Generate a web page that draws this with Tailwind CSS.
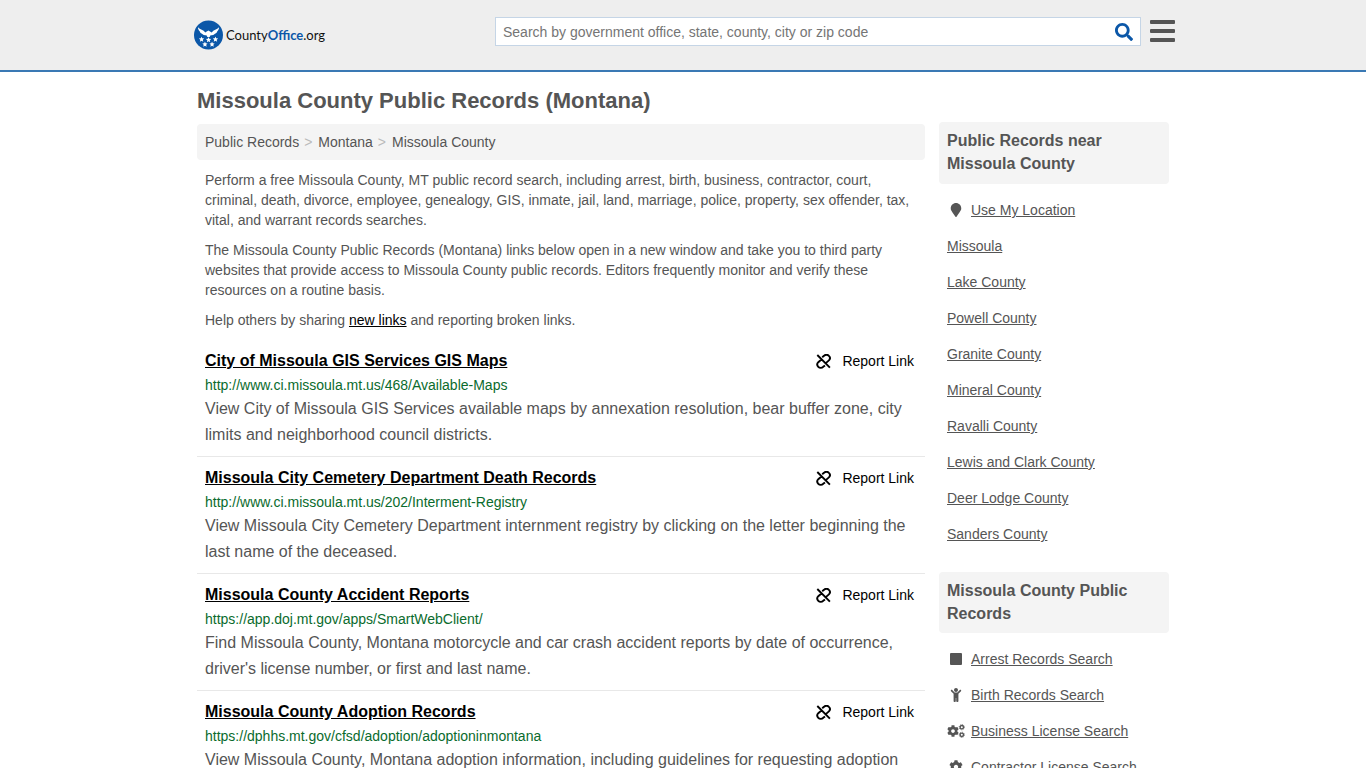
<!DOCTYPE html>
<html lang="en">
<head>
<meta charset="utf-8">
<meta name="viewport" content="width=device-width, initial-scale=1">
<title>Missoula County Public Records (Montana)</title>
<script src="https://cdn.jsdelivr.net/npm/@tailwindcss/browser@4"></script>
</head>
<body class="bg-white font-['Liberation_Sans',Arial,sans-serif] text-sm text-[#555]">
<svg class="hidden" aria-hidden="true">
  <symbol id="unlink" viewBox="0 0 15 15"><g fill="none" stroke="currentColor" stroke-width="1.900"><path d="M1.300 1 13.900 13.600M6.200 3.200 8 1.800a3.300 3.300 0 0 1 4.900 0 3.300 3.300 0 0 1 0 4.600L9.800 9.100M9 11.400 7.200 12.800a3.300 3.300 0 0 1-4.900 0 3.300 3.300 0 0 1 0-4.600L5.400 5.500"/></g></symbol>
  <symbol id="cog" viewBox="0 0 512 512"><path fill="currentColor" d="M487.400 315.700l-42.600-24.600c4.300-23.200 4.300-47 0-70.200l42.600-24.600c4.900-2.800 7.100-8.600 5.500-14-11.100-35.600-30-67.800-54.700-94.600-3.800-4.100-10-5.100-14.800-2.300L380.800 110c-17.900-15.400-38.500-27.300-60.800-35.100V25.800c0-5.600-3.900-10.500-9.400-11.700-36.700-8.200-74.300-7.800-109.200 0-5.500 1.200-9.400 6.100-9.400 11.700V75c-22.200 7.900-42.800 19.800-60.800 35.100L88.700 85.500c-4.900-2.800-11-1.900-14.800 2.300-24.700 26.700-43.600 58.900-54.700 94.600-1.700 5.400.6 11.200 5.500 14L67.300 221c-4.300 23.200-4.300 47 0 70.200l-42.600 24.600c-4.900 2.800-7.100 8.600-5.500 14 11.100 35.600 30 67.800 54.700 94.600 3.800 4.100 10 5.100 14.800 2.300l42.600-24.600c17.900 15.400 38.500 27.300 60.800 35.100v49.200c0 5.600 3.900 10.500 9.400 11.700 36.700 8.200 74.300 7.800 109.200 0 5.500-1.200 9.400-6.100 9.400-11.700v-49.200c22.200-7.900 42.800-19.800 60.800-35.100l42.600 24.600c4.900 2.800 11 1.900 14.800-2.300 24.700-26.700 43.600-58.900 54.700-94.600 1.500-5.500-.7-11.300-5.600-14.100zM256 336c-44.100 0-80-35.900-80-80s35.900-80 80-80 80 35.900 80 80-35.900 80-80 80z"/></symbol>
  <symbol id="star" viewBox="0 0 10 10"><path fill="#fff" d="M5 0 6.300 3.400 10 3.700 7.200 6 8.100 9.700 5 7.700 1.900 9.700 2.800 6 0 3.700 3.700 3.400z"/></symbol>
</svg>

<header class="border-b-2 border-[#3a79b4] bg-[#eee]">
  <div class="mx-auto flex max-w-[980px] items-start justify-between pt-4 pb-5">
    <a href="#" aria-label="CountyOffice.org" class="flex items-center gap-[3px] pt-1 text-[13px] leading-5">
      <svg class="size-[30px]" viewBox="0 0 30 30" aria-hidden="true">
        <circle cx="15.500" cy="15" r="14.500" fill="#0b57a8"/>
        <path fill="#fff" d="M5 7.200C7 9.500 10.500 9.800 12.300 12.400L13.700 11.400 15.500 10.600 17 11.600 18.700 12.400C20.500 9.800 24 9.500 26 7.200 26 9 25.400 10.300 24.300 11.200 24 12.600 22.800 13.600 21.600 13.900 20.600 15 19 15.400 17.600 15.300L16.600 17h-2.200l-1-1.700C12 15.400 10.400 15 9.400 13.900 8.200 13.600 7 12.600 6.700 11.200 5.600 10.300 5 9 5 7.200z"/>
        <use href="#star" x="5.800" y="16.500" width="5.500" height="5.500"/><use href="#star" x="12.800" y="17" width="5.500" height="5.500"/><use href="#star" x="19.700" y="16.500" width="5.500" height="5.500"/>
        <use href="#star" x="9.200" y="21.500" width="5.500" height="5.500"/><use href="#star" x="16.300" y="21.500" width="5.500" height="5.500"/>
      </svg>
      <span class="font-[Lato,sans-serif] text-[#111]">County<b class="text-[#0b57a8]">Office</b>.org</span>
    </a>
    <div class="flex items-start gap-[9px]">
      <form class="mt-px flex h-[29px] w-[646px] items-center border border-[#c5d5e6] bg-white">
        <input type="search" aria-label="Search" placeholder="Search by government office, state, county, city or zip code" class="min-w-0 flex-1 px-[7px] text-sm outline-none placeholder:text-[#757575]">
        <button type="button" aria-label="Submit search" class="mr-[7px] text-[#0b57a8]"><svg class="size-[18px]" viewBox="0 0 512 512"><path fill="currentColor" d="M505 442.700L405.300 343c-4.500-4.500-10.600-7-17-7H372c27.600-35.300 44-79.700 44-128C416 93.100 322.900 0 208 0S0 93.100 0 208s93.100 208 208 208c48.300 0 92.700-16.400 128-44v16.300c0 6.400 2.500 12.500 7 17l99.700 99.700c9.400 9.400 24.600 9.400 33.900 0l28.300-28.300c9.400-9.400 9.400-24.600.1-34zM208 336c-70.700 0-128-57.200-128-128 0-70.700 57.200-128 128-128 70.700 0 128 57.200 128 128 0 70.700-57.200 128-128 128z"/></svg></button>
      </form>
      <button type="button" aria-label="Menu" class="-mr-[2px] mt-1 flex w-[25px] flex-col gap-[5px]"><span class="h-1 w-full rounded-[1px] bg-[#555]"></span><span class="h-1 w-full rounded-[1px] bg-[#555]"></span><span class="h-1 w-full rounded-[1px] bg-[#555]"></span></button>
    </div>
  </div>
</header>

<div class="mx-auto flex max-w-[972px] items-start gap-[14px]">
  <main class="min-w-0 flex-1">
    <h1 class="mt-[14px] text-[22px] leading-[30px] font-bold">Missoula County Public Records (Montana)</h1>
    <nav aria-label="Breadcrumb" class="mt-2 flex h-9 items-center gap-[5px] rounded bg-[#f4f4f4] px-2"><a href="#">Public Records</a><span class="mr-px text-[#bbb]">&gt;</span><a href="#">Montana</a><span class="mr-px text-[#bbb]">&gt;</span><a href="#">Missoula County</a></nav>
    <div class="mt-[10px] flex flex-col gap-[10px] px-2 leading-5">
      <p>Perform a free Missoula County, MT public record search, including arrest, birth, business, contractor, court, criminal, death, divorce, employee, genealogy, GIS, inmate, jail, land, marriage, police, property, sex offender, tax, vital, and warrant records searches.</p>
      <p>The Missoula County Public Records (Montana) links below open in a new window and take you to third party websites that provide access to Missoula County public records. Editors frequently monitor and verify these resources on a routine basis.</p>
      <p>Help others by sharing <a href="#" class="text-black underline">new links</a> and reporting broken links.</p>
    </div>
    <ul class="mt-[10px]">
      <li class="border-b border-[#e8e8e8] px-2 py-2">
        <div class="flex items-center justify-between leading-[26px] text-black"><a href="#" class="text-base leading-[26px] font-bold underline">City of Missoula GIS Services GIS Maps</a><button type="button" class="mr-[3px] flex items-center gap-[11px]"><svg class="size-[15px]"><use href="#unlink"/></svg>Report Link</button></div>
        <a href="#" class="block leading-[22px] text-[#0a6b2d]">http://www.ci.missoula.mt.us/468/Available-Maps</a>
        <p class="text-base leading-[26px]">View City of Missoula GIS Services available maps by annexation resolution, bear buffer zone, city limits and neighborhood council districts.</p>
      </li>
      <li class="border-b border-[#e8e8e8] px-2 py-2">
        <div class="flex items-center justify-between leading-[26px] text-black"><a href="#" class="text-base leading-[26px] font-bold underline">Missoula City Cemetery Department Death Records</a><button type="button" class="mr-[3px] flex items-center gap-[11px]"><svg class="size-[15px]"><use href="#unlink"/></svg>Report Link</button></div>
        <a href="#" class="block leading-[22px] text-[#0a6b2d]">http://www.ci.missoula.mt.us/202/Interment-Registry</a>
        <p class="text-base leading-[26px]">View Missoula City Cemetery Department internment registry by clicking on the letter beginning the last name of the deceased.</p>
      </li>
      <li class="border-b border-[#e8e8e8] px-2 py-2">
        <div class="flex items-center justify-between leading-[26px] text-black"><a href="#" class="text-base leading-[26px] font-bold underline">Missoula County Accident Reports</a><button type="button" class="mr-[3px] flex items-center gap-[11px]"><svg class="size-[15px]"><use href="#unlink"/></svg>Report Link</button></div>
        <a href="#" class="block leading-[22px] text-[#0a6b2d]">https://app.doj.mt.gov/apps/SmartWebClient/</a>
        <p class="text-base leading-[26px]">Find Missoula County, Montana motorcycle and car crash accident reports by date of occurrence, driver's license number, or first and last name.</p>
      </li>
      <li class="px-2 py-2">
        <div class="flex items-center justify-between leading-[26px] text-black"><a href="#" class="text-base leading-[26px] font-bold underline">Missoula County Adoption Records</a><button type="button" class="mr-[3px] flex items-center gap-[11px]"><svg class="size-[15px]"><use href="#unlink"/></svg>Report Link</button></div>
        <a href="#" class="block leading-[22px] text-[#0a6b2d]">https://dphhs.mt.gov/cfsd/adoption/adoptioninmontana</a>
        <p class="text-base leading-[26px]">View Missoula County, Montana adoption information, including guidelines for requesting adoption</p>
      </li>
    </ul>
  </main>

  <aside class="mt-[50px] w-[230px] shrink-0">
    <h2 class="rounded bg-[#f4f4f4] px-2 pt-[7px] pb-[9px] text-base leading-[23px] font-bold">Public Records near Missoula County</h2>
    <ul class="mt-4 flex flex-col gap-4 px-2 leading-5">
      <li class="flex items-center gap-[6px]"><svg class="h-[14px] w-[18px]" viewBox="0 0 384 512" aria-hidden="true"><path fill="currentColor" d="M172.268 501.670C26.970 291.031 0 269.413 0 192 0 85.961 85.961 0 192 0s192 85.961 192 192c0 77.413-26.970 99.031-172.268 309.670-9.535 13.774-29.930 13.773-39.464 0z"/></svg><a href="#" class="underline">Use My Location</a></li>
      <li><a href="#" class="underline">Missoula</a></li>
      <li><a href="#" class="underline">Lake County</a></li>
      <li><a href="#" class="underline">Powell County</a></li>
      <li><a href="#" class="underline">Granite County</a></li>
      <li><a href="#" class="underline">Mineral County</a></li>
      <li><a href="#" class="underline">Ravalli County</a></li>
      <li><a href="#" class="underline">Lewis and Clark County</a></li>
      <li><a href="#" class="underline">Deer Lodge County</a></li>
      <li><a href="#" class="underline">Sanders County</a></li>
    </ul>
    <h2 class="mt-7 rounded bg-[#f4f4f4] px-2 pt-[7px] pb-2 text-base leading-[23px] font-bold">Missoula County Public Records</h2>
    <ul class="mt-4 flex flex-col gap-4 px-2 leading-5">
      <li class="flex items-center gap-[6px]"><svg class="h-[14px] w-[18px]" viewBox="0 0 18 14" aria-hidden="true"><rect x="3" y="1" width="12" height="12" rx="1" fill="currentColor"/></svg><a href="#" class="underline">Arrest Records Search</a></li>
      <li class="flex items-center gap-[6px]"><svg class="h-[14px] w-[18px]" viewBox="0 0 384 512" aria-hidden="true"><path fill="currentColor" d="M120 72c0-39.765 32.235-72 72-72s72 32.235 72 72c0 39.764-32.235 72-72 72s-72-32.236-72-72zm254.627 1.373c-12.496-12.497-32.758-12.497-45.254 0L242.745 160H141.254L54.627 73.373c-12.496-12.497-32.758-12.497-45.254 0-12.497 12.497-12.497 32.758 0 45.255L104 213.254V480c0 17.673 14.327 32 32 32h16c17.673 0 32-14.327 32-32V368h16v112c0 17.673 14.327 32 32 32h16c17.673 0 32-14.327 32-32V213.254l94.627-94.627c12.497-12.497 12.497-32.757 0-45.254z"/></svg><a href="#" class="underline">Birth Records Search</a></li>
      <li class="flex items-center gap-[6px]"><svg class="h-[14px] w-[18px]" viewBox="0 0 18 14" aria-hidden="true"><use href="#cog" x="0" y="1" width="12" height="12"/><g fill="none" stroke="currentColor"><circle cx="14.800" cy="3.200" r="1.700" stroke-width="1.400"/><circle cx="14.800" cy="10.800" r="1.700" stroke-width="1.400"/><circle cx="14.800" cy="3.200" r="2.600" stroke-width=".8" stroke-dasharray="1.100 .94"/><circle cx="14.800" cy="10.800" r="2.600" stroke-width=".8" stroke-dasharray="1.100 .94"/></g></svg><a href="#" class="underline">Business License Search</a></li>
      <li class="flex items-center gap-[6px]"><svg class="h-[14px] w-[18px]" aria-hidden="true"><use href="#cog"/></svg><a href="#" class="underline">Contractor License Search</a></li>
    </ul>
  </aside>
</div>
</body>
</html>
